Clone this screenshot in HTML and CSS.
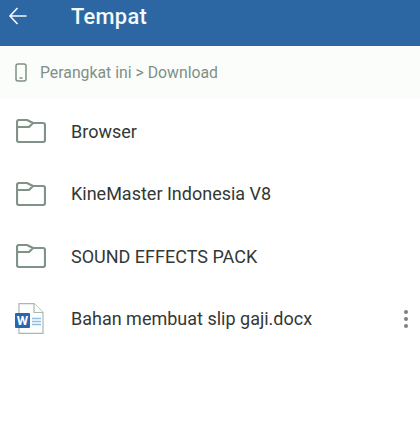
FILE: index.html
```html
<!DOCTYPE html>
<html lang="id">
<head>
  <meta charset="UTF-8" />
  <title>Tempat</title>
  <link rel="stylesheet" href="styles.css">
</head>
<body>
  <header class="topbar">
    <svg class="back" width="20" height="18" viewBox="0 0 20 18"><path d="M18.500 9H2M9.500 1 2 9l7.500 8"/></svg>
    <h1>Tempat</h1>
  </header>

  <div class="crumb">
    <svg class="phone" width="12" height="19" viewBox="0 0 12 19"><rect x="1" y="1" width="10" height="17" rx="2"/><path d="M4.500 15h3"/></svg>
    <span>Perangkat ini &gt; Download</span>
  </div>

  <ul class="files">
    <li>
      <svg class="folder" width="30" height="24" viewBox="0 0 30 24"><path d="M1 8V3a2 2 0 0 1 2-2h8l6 3h10a2 2 0 0 1 2 2v15a2 2 0 0 1-2 2H3a2 2 0 0 1-2-2V8h12l4-4"/></svg>
      <span>Browser</span>
    </li>
    <li>
      <svg class="folder" width="30" height="24" viewBox="0 0 30 24"><path d="M1 8V3a2 2 0 0 1 2-2h8l6 3h10a2 2 0 0 1 2 2v15a2 2 0 0 1-2 2H3a2 2 0 0 1-2-2V8h12l4-4"/></svg>
      <span>KineMaster Indonesia V8</span>
    </li>
    <li>
      <svg class="folder" width="30" height="24" viewBox="0 0 30 24"><path d="M1 8V3a2 2 0 0 1 2-2h8l6 3h10a2 2 0 0 1 2 2v15a2 2 0 0 1-2 2H3a2 2 0 0 1-2-2V8h12l4-4"/></svg>
      <span>SOUND EFFECTS PACK</span>
    </li>
    <li>
      <svg class="doc" width="30" height="32" viewBox="0 0 30 32">
        <path class="sheet" d="M4 .6h15L28 9.500V30.400H4z"/>
        <path class="sheet" d="M19 .6v8.900H28"/>
        <path class="lines" d="M17 15.500h9M17 18.500h9M17 21.500h9"/>
        <rect class="badge" x="0" y="10" width="15" height="15" rx="1"/>
        <text class="badge-w" x="7.500" y="22">W</text>
      </svg>
      <span class="name">Bahan membuat slip gaji.docx</span>
      <div class="more"><i></i><i></i><i></i></div>
    </li>
  </ul>
</body>
</html>
```

FILE: styles.css
```css
body {
  margin: 0;
  background: #fff;
  font-family: Roboto, "Liberation Sans", sans-serif;
  color: #333835;
}
.topbar {
  height: 46px;
  background: #2c67a4;
  display: flex;
  align-items: center;
  padding: 0 0 15px 8px;
  box-sizing: border-box;
  color: #f4fafa;
}
.topbar h1 {
  margin: 2px 0 0 43px;
  font-size: 21.800px;
  font-weight: 500;
  letter-spacing: 0.3px;
}
.back {
  fill: none;
  stroke: #f4fafa;
  stroke-width: 1.600;
}
.crumb {
  height: 52px;
  margin-bottom: 2px;
  background: #fbfdfb;
  display: flex;
  align-items: center;
  padding: 1px 0 0 15px;
  box-sizing: border-box;
  gap: 13px;
  font-size: 15.800px;
  color: #828f86;
}
.phone {
  fill: none;
  stroke: #7f9085;
  stroke-width: 1.500;
}
.files {
  list-style: none;
  margin: 0;
  padding: 0;
}
.files li {
  height: 62.500px;
  display: flex;
  align-items: center;
  padding-left: 16px;
  gap: 25px;
  font-size: 18px;
}
.folder {
  fill: none;
  stroke: #7f9388;
  stroke-width: 2.200;
  stroke-linejoin: round;
}
.doc {
  margin-left: -1px;
  margin-right: 1px;
}
.sheet {
  fill: #fdfefe;
  stroke: #a9b8b2;
  stroke-width: 1.200;
}
.lines {
  stroke: #8fc0e4;
  stroke-width: 1.500;
}
.badge {
  fill: #2a66ad;
}
.badge-w {
  fill: #fff;
  font-size: 13px;
  font-weight: 700;
  text-anchor: middle;
}
.name {
  flex: 1;
}
.more {
  display: flex;
  flex-direction: column;
  gap: 3px;
  width: 4px;
  margin-right: 12px;
}
.more i {
  width: 4px;
  height: 4px;
  border-radius: 50%;
  background: #7d8480;
}
```
